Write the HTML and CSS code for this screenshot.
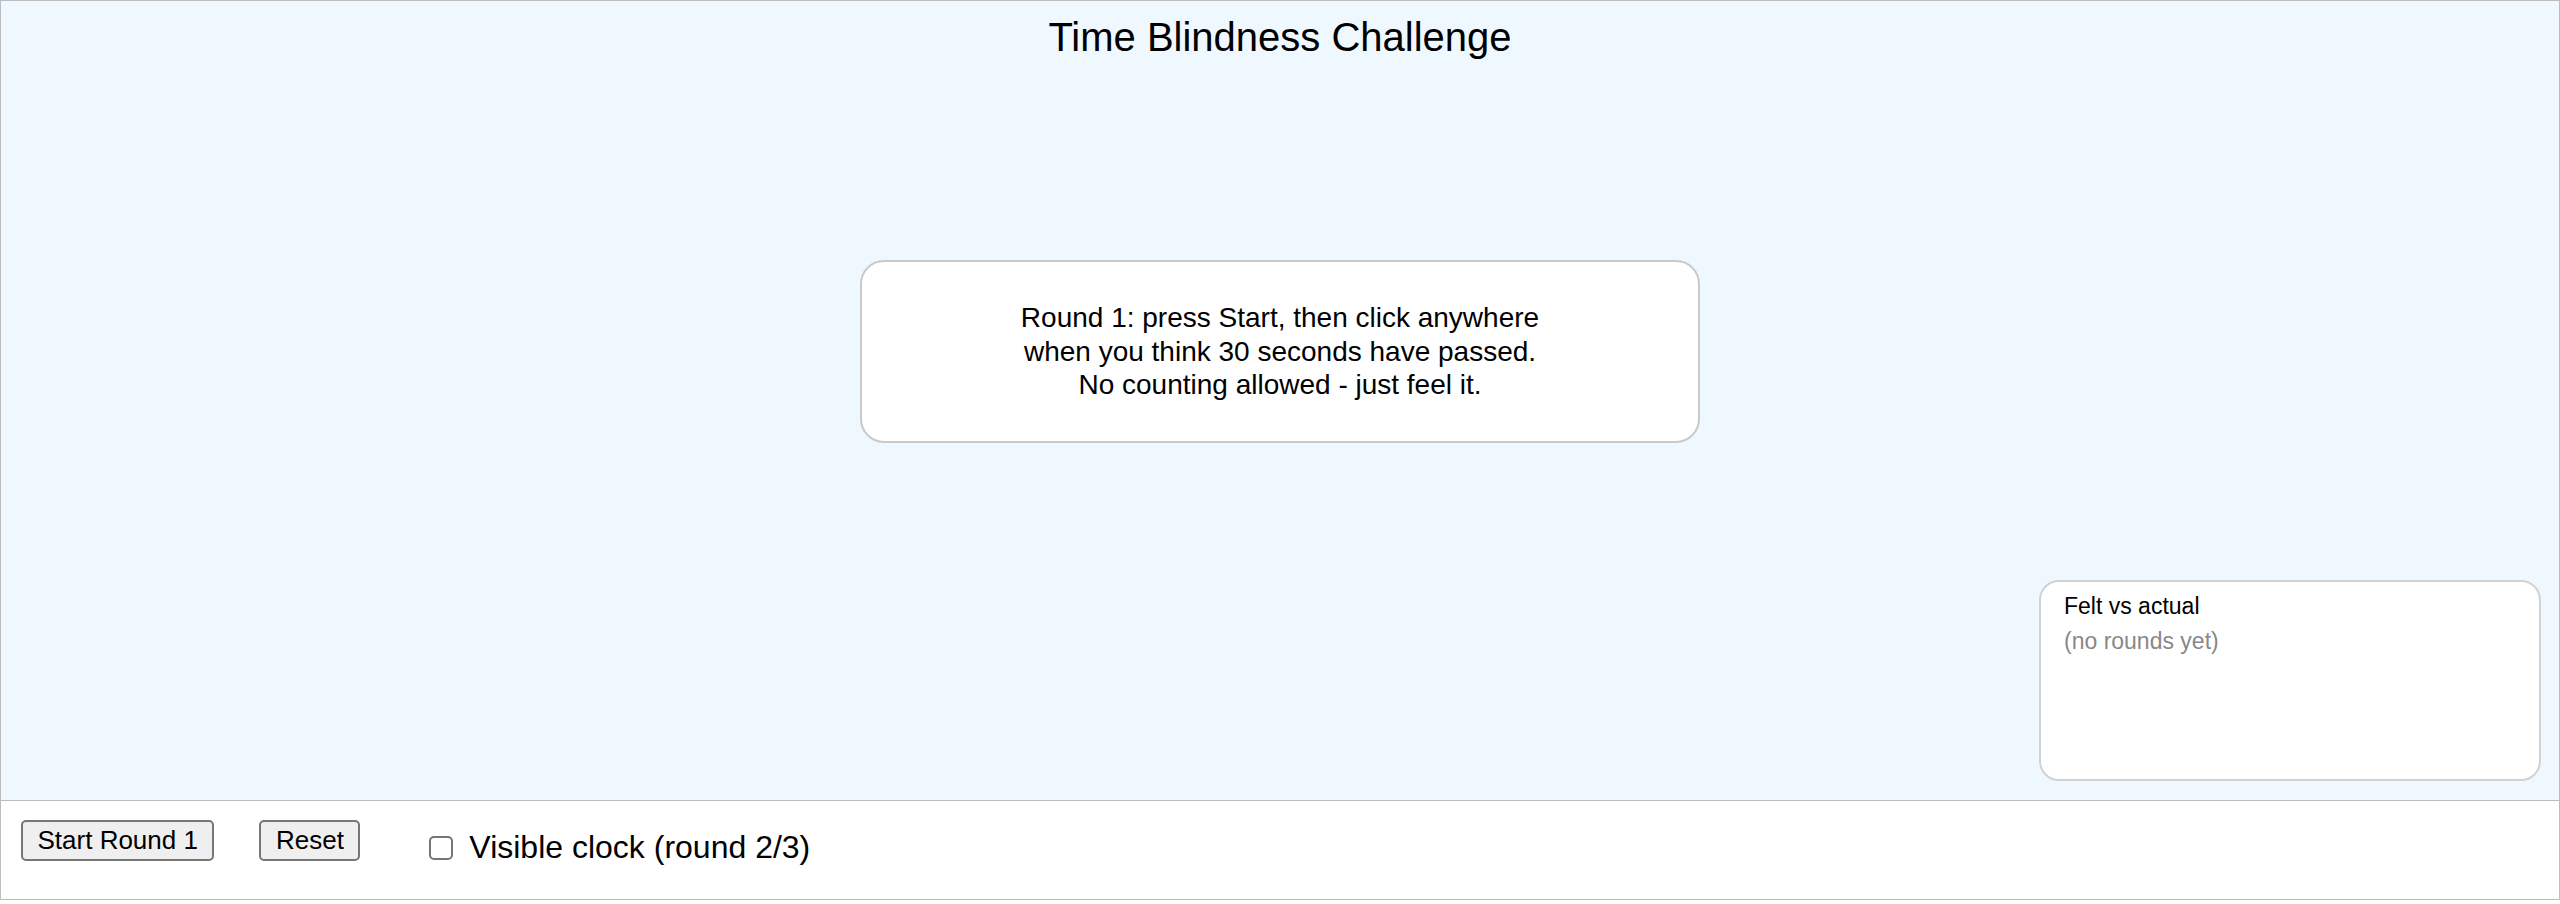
FILE: index.html
```html
<!DOCTYPE html>
<html lang="en">
<head>
<meta charset="utf-8">
<title>Time Blindness Challenge</title>
<link rel="stylesheet" href="styles.css">
</head>
<body>
<div class="app">
  <main class="stage">
    <h1 class="title">Time Blindness Challenge</h1>
    <div class="message">
      Round 1: press Start, then click anywhere<br>
      when you think 30 seconds have passed.<br>
      No counting allowed - just feel it.
    </div>
    <aside class="results">
      <div class="results-title">Felt vs actual</div>
      <div class="results-empty">(no rounds yet)</div>
    </aside>
  </main>
  <footer class="controls">
    <button class="btn" type="button">Start Round 1</button>
    <button class="btn btn-reset" type="button">Reset</button>
    <label class="toggle"><input class="check" type="checkbox">Visible clock (round 2/3)</label>
  </footer>
</div>
</body>
</html>
```
FILE: styles.css
```css
* { box-sizing: border-box; }
html, body { margin: 0; padding: 0; background: #ffffff; }
body { font-family: "Liberation Sans", Arial, Helvetica, sans-serif; color: #000; }

.app {
  width: 2560px;
  height: 900px;
  border: 1px solid #bdbdbd;
  display: flex;
  flex-direction: column;
}

.stage {
  height: 800px;
  background: #eff7ff;
  border-bottom: 1px solid #bdbdbd;
  display: flex;
  flex-direction: column;
  align-items: center;
  padding-top: 13px;
}

.title {
  margin: 0;
  font-size: 40px;
  font-weight: normal;
  line-height: 46px;
  text-align: center;
}

.message {
  margin-top: 200px;
  width: 840px;
  background: #ffffff;
  border: 2px solid #c9c9c9;
  border-radius: 24px;
  padding: 39px 20px;
  font-size: 28px;
  line-height: 33.5px;
  text-align: center;
}

.results {
  margin-top: auto;
  margin-right: 18px;
  margin-bottom: 19px;
  align-self: flex-end;
  width: 502px;
  height: 201px;
  background: #ffffff;
  border: 2px solid #d2d2d2;
  border-radius: 20px;
  padding: 12px 23px;
}

.results-title {
  font-size: 23px;
  line-height: 24px;
}

.results-empty {
  margin-top: 11px;
  font-size: 23px;
  line-height: 24px;
  color: #888888;
}

.controls {
  flex: 1;
  background: #ffffff;
  display: flex;
  align-items: flex-start;
  padding: 19px 20px 0 20px;
}

.btn {
  font-family: "Liberation Sans", Arial, Helvetica, sans-serif;
  font-size: 26px;
  line-height: 31px;
  padding: 3px 14.5px;
  background: #efefef;
  color: #000;
  border: 2px solid #767676;
  border-radius: 5px;
  margin: 0;
}

.btn-reset { margin-left: 45px; }

.toggle {
  margin-left: 69px;
  margin-top: 9px;
  display: flex;
  align-items: center;
  font-size: 32px;
  line-height: 37px;
}

.check {
  appearance: none;
  -webkit-appearance: none;
  width: 24px;
  height: 24px;
  margin: 0 16px 0 0;
  border: 2px solid #767676;
  border-radius: 5px;
  background: #ffffff;
}
```
